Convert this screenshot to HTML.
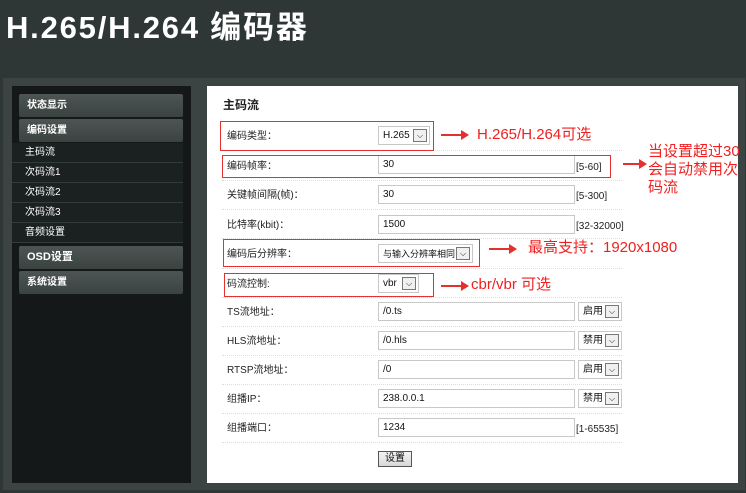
<!DOCTYPE html>
<html><head><meta charset="utf-8"><style>
*{margin:0;padding:0;box-sizing:border-box}
body{width:746px;height:493px;background:#2e3636;position:relative;overflow:hidden;font-family:"Liberation Sans","Noto Sans CJK SC",sans-serif}
.abs{position:absolute}
h1{position:absolute;left:6px;top:8px;font-size:31px;color:#fff;font-weight:bold;font-family:"Liberation Sans","Noto Sans CJK SC",sans-serif;letter-spacing:1.8px;line-height:40px}
.frame{left:3px;top:78px;width:742px;height:412px;background:#3b4442}
.side{left:12px;top:86px;width:179px;height:397px;background:#141818}
.tab{position:absolute;left:7px;width:164px;height:23px;background:linear-gradient(#4c5553,#3b4341);border-radius:2px;color:#fff;font-size:10px;font-weight:bold;line-height:23px;padding-left:8px}
.sub{position:absolute;left:0;width:171px;height:20px;border-bottom:1px solid #333b3a;color:#fff;font-size:10px;line-height:20px;padding-left:13px;background:#1b2020}
.main{left:207px;top:86px;width:531px;height:397px;background:#fff}
.lbl{position:absolute;left:227px;font-size:10px;color:#222;line-height:12px;margin-top:2px}
.inp{position:absolute;left:378px;width:197px;height:19px;border:1px solid #c8c8c8;font-size:10px;line-height:12px;padding-left:4px;color:#111;display:flex;align-items:center}
.rng{position:absolute;left:576px;font-size:10px;color:#222;line-height:12px;margin-top:3px}
.sel{position:absolute;border:1px solid #c8c8c8;height:19px;font-size:10px;line-height:12px;padding-left:4px;color:#111;background:#fff;display:flex;align-items:center}
.dd{position:absolute;right:2px;top:2px;width:14px;height:13px;border:1px solid #777;background:#f0f0f0;font-size:8px;line-height:11px;text-align:center}
.sep{position:absolute;left:222px;width:400px;border-top:1px dotted #ddd}
.red{position:absolute;border:1px solid #e53030}
.arr{position:absolute;height:2px;background:#e53030}
.arr:after{content:"";position:absolute;right:-6px;top:-4px;border-left:8px solid #e53030;border-top:5px solid transparent;border-bottom:5px solid transparent}
.note{position:absolute;color:#f02020;font-size:15px;line-height:18px}
</style></head><body>
<h1>H.265/H.264 编码器</h1>
<div class="abs frame"></div>
<div class="abs side">
<div class="tab" style="top:8px">状态显示</div>
<div class="tab" style="top:33px">编码设置</div>
<div class="sub" style="top:57px">主码流</div>
<div class="sub" style="top:77px">次码流1</div>
<div class="sub" style="top:97px">次码流2</div>
<div class="sub" style="top:117px">次码流3</div>
<div class="sub" style="top:137px">音频设置</div>
<div class="tab" style="top:160px;font-size:11px">OSD设置</div>
<div class="tab" style="top:185px">系统设置</div>
</div>
<div class="abs main"></div>
<div class="abs" style="left:223px;top:98px;font-size:12px;font-weight:bold;color:#222;line-height:14px">主码流</div>

<div class="lbl" style="top:129px">编码类型：</div>
<div class="sel" style="left:378px;top:126px;width:52px">H.265<div class="dd">⌵</div></div>
<div class="sep" style="top:150px"></div>
<div class="lbl" style="top:159px">编码帧率：</div>
<div class="inp" style="top:155px">30</div><div class="rng" style="top:159px">[5-60]</div>
<div class="sep" style="top:180px"></div>
<div class="lbl" style="top:188px">关键帧间隔(帧)：</div>
<div class="inp" style="top:185px">30</div><div class="rng" style="top:188px">[5-300]</div>
<div class="sep" style="top:209px"></div>
<div class="lbl" style="top:218px">比特率(kbit)：</div>
<div class="inp" style="top:215px">1500</div><div class="rng" style="top:218px">[32-32000]</div>
<div class="sep" style="top:238px"></div>
<div class="lbl" style="top:247px">编码后分辨率：</div>
<div class="sel" style="left:378px;top:244px;width:95px;font-size:9px">与输入分辨率相同<div class="dd">⌵</div></div>
<div class="sep" style="top:268px"></div>
<div class="lbl" style="top:277px">码流控制:</div>
<div class="sel" style="left:378px;top:274px;width:41px">vbr<div class="dd">⌵</div></div>
<div class="sep" style="top:297px"></div>
<div class="lbl" style="top:305px">TS流地址：</div>
<div class="inp" style="top:302px">/0.ts</div>
<div class="sel" style="left:578px;top:302px;width:44px">启用<div class="dd">⌵</div></div>
<div class="sep" style="top:326px"></div>
<div class="lbl" style="top:334px">HLS流地址：</div>
<div class="inp" style="top:331px">/0.hls</div>
<div class="sel" style="left:578px;top:331px;width:44px">禁用<div class="dd">⌵</div></div>
<div class="sep" style="top:355px"></div>
<div class="lbl" style="top:363px">RTSP流地址：</div>
<div class="inp" style="top:360px">/0</div>
<div class="sel" style="left:578px;top:360px;width:44px">启用<div class="dd">⌵</div></div>
<div class="sep" style="top:384px"></div>
<div class="lbl" style="top:392px">组播IP：</div>
<div class="inp" style="top:389px">238.0.0.1</div>
<div class="sel" style="left:578px;top:389px;width:44px">禁用<div class="dd">⌵</div></div>
<div class="sep" style="top:413px"></div>
<div class="lbl" style="top:421px">组播端口：</div>
<div class="inp" style="top:418px">1234</div><div class="rng" style="top:421px">[1-65535]</div>
<div class="sep" style="top:442px"></div>
<div class="abs" style="left:378px;top:451px;width:34px;height:16px;border:1px solid #555;background:linear-gradient(#f4f4f4,#d8d8d8);font-size:10px;line-height:14px;text-align:center;color:#111">设置</div>

<div class="red" style="left:220px;top:121px;width:214px;height:30px"></div>
<div class="red" style="left:222px;top:155px;width:389px;height:23px"></div>
<div class="red" style="left:223px;top:239px;width:257px;height:28px"></div>
<div class="red" style="left:224px;top:273px;width:210px;height:24px"></div>

<div class="arr" style="left:441px;top:134px;width:22px"></div>
<div class="note" style="left:477px;top:126px">H.265/H.264可选</div>
<div class="arr" style="left:623px;top:163px;width:18px"></div>
<div class="note" style="left:648px;top:143px">当设置超过30<br>会自动禁用次<br>码流</div>
<div class="arr" style="left:489px;top:248px;width:22px"></div>
<div class="note" style="left:528px;top:239px">最高支持：1920x1080</div>
<div class="arr" style="left:441px;top:285px;width:22px"></div>
<div class="note" style="left:471px;top:276px">cbr/vbr 可选</div>
</body></html>
